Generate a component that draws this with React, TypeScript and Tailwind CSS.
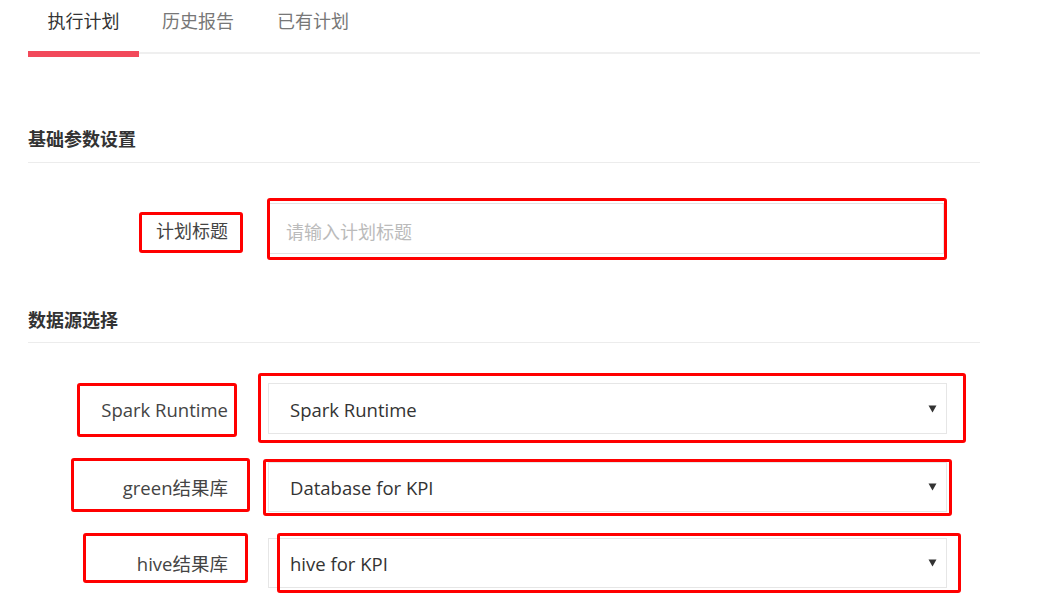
import React from "react";

const font = { fontFamily: '"Open Sans", "Noto Sans CJK SC", sans-serif' };

function Arrow() {
  return (
    <svg width="9" height="8" viewBox="0 0 9 8" className="shrink-0">
      <path d="M0.5 0.5 L8.5 0.5 L4.5 7.5 Z" fill="#333" />
    </svg>
  );
}

function LabelRow({
  label,
  value,
  h,
  mt,
}: {
  label: string;
  value: string;
  h: string;
  mt: string;
}) {
  return (
    <div className={`flex items-center ${mt}`}>
      <div className="w-[200px] shrink-0 text-right text-[18.5px] text-[#444] pt-[2px]">{label}</div>
      <div
        className={`ml-[40px] w-[679px] ${h} border border-[#e6e6e6] flex items-center justify-between pl-[21px] pr-[9px] text-[18.5px] text-[#333]`}
      >
        <span className="pt-[2px]">{value}</span>
        <Arrow />
      </div>
    </div>
  );
}

export default function App() {
  const boxes: { l: number; t: number; w: number; h: number }[] = [
    { l: 139, t: 212, w: 104, h: 41 },
    { l: 267, t: 198, w: 680, h: 62 },
    { l: 77, t: 383, w: 160, h: 54 },
    { l: 258, t: 373, w: 708, h: 70 },
    { l: 71, t: 458, w: 179, h: 54 },
    { l: 263, t: 459, w: 689, h: 57 },
    { l: 83, t: 533, w: 165, h: 50 },
    { l: 277, t: 533, w: 684, h: 60 },
  ];
  return (
    <div className="relative w-[1045px] h-[614px] bg-white overflow-hidden" style={font}>
      <div className="pl-[28px] w-[980px]">
        {/* Tabs */}
        <div className="flex items-start h-[54px] border-b-2 border-[#efefef]">
          <div className="relative w-[111px] h-[57px] flex flex-col shrink-0">
            <div className="h-[51px] flex items-start justify-center pt-[8px] text-[18px] text-[#333] leading-[26px]">
              执行计划
            </div>
            <div className="h-[6px] bg-[#f2495a]" />
          </div>
          <div className="ml-[23px] pt-[8px] text-[18px] leading-[26px] text-[#777]">历史报告</div>
          <div className="ml-[43px] pt-[8px] text-[18px] leading-[26px] text-[#777]">已有计划</div>
        </div>

        {/* Section 1 */}
        <div className="mt-[73px] pb-[11px] border-b border-[#ececec] text-[18px] leading-[24px] font-bold text-[#333]">
          基础参数设置
        </div>
        <div className="flex items-center mt-[40px]">
          <div className="w-[200px] shrink-0 text-right text-[18px] text-[#444] pt-[6px]">计划标题</div>
          <div className="ml-[41px] w-[675px] h-[51px] border border-[#e3e3e3] flex items-center pl-[16px] pt-[7px] text-[18px] text-[#bbb]">
            请输入计划标题
          </div>
        </div>

        {/* Section 2 */}
        <div className="mt-[54px] pb-[10px] border-b border-[#ececec] text-[18px] leading-[24px] font-bold text-[#333]">
          数据源选择
        </div>
        <LabelRow label="Spark Runtime" value="Spark Runtime" h="h-[51px]" mt="mt-[40px]" />
        <LabelRow label="green结果库" value="Database for KPI" h="h-[50px]" mt="mt-[28px]" />
        <LabelRow label="hive结果库" value="hive for KPI" h="h-[50px]" mt="mt-[26px]" />
      </div>

      {/* Annotation overlay */}
      {boxes.map((b, i) => (
        <div
          key={i}
          className="absolute border-[3px] border-[#ff0000] rounded-[3px] pointer-events-none"
          style={{ left: b.l, top: b.t, width: b.w, height: b.h }}
        />
      ))}
    </div>
  );
}
